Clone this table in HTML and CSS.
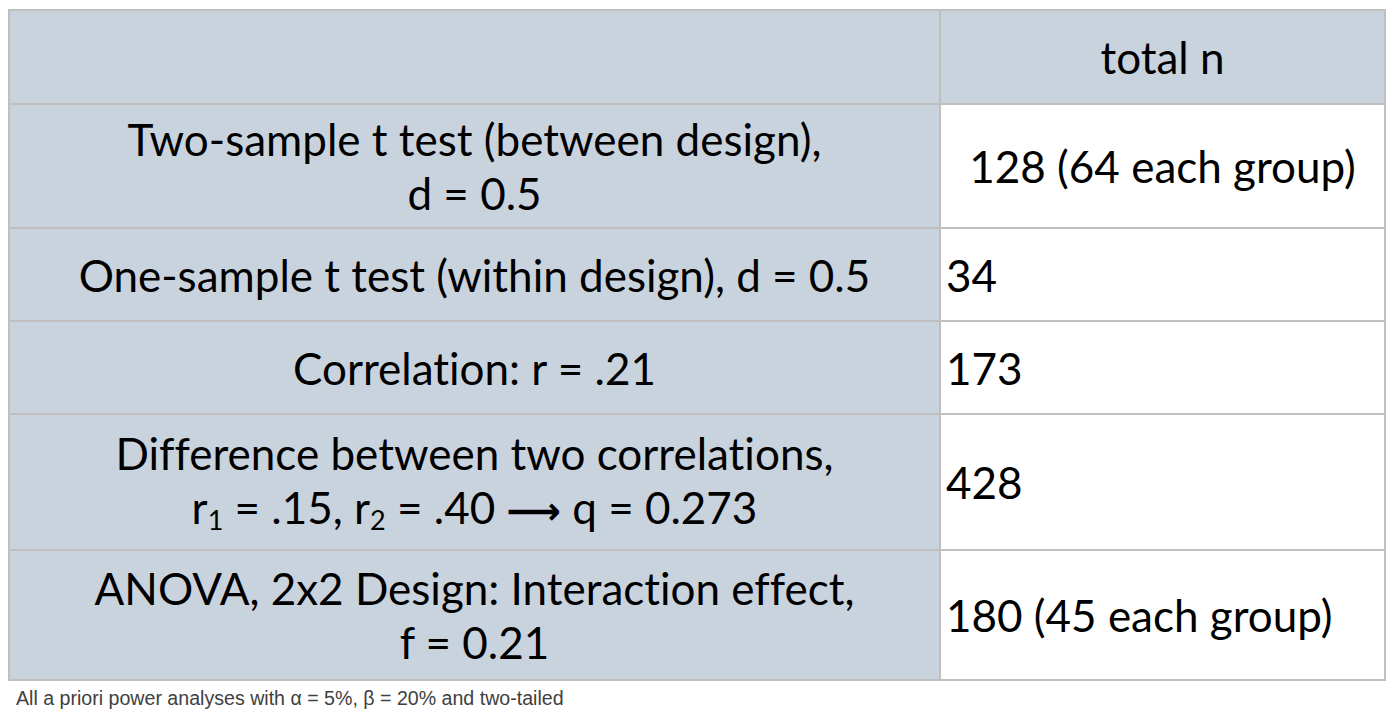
FILE: index.html
```html
<!DOCTYPE html>
<html>
<head>
<meta charset="utf-8">
<link rel="stylesheet" href="styles.css">
</head>
<body>
<div class="page">
  <table class="power">
    <tr class="r-head">
      <th class="label"></th>
      <th class="value center">total n</th>
    </tr>
    <tr class="r1">
      <td class="label">Two-sample t test (between design),<br>d = 0.5</td>
      <td class="value center">128 (64 each group)</td>
    </tr>
    <tr class="r2">
      <td class="label">One-sample t test (within design), d = 0.5</td>
      <td class="value">34</td>
    </tr>
    <tr class="r3">
      <td class="label">Correlation: r = .21</td>
      <td class="value">173</td>
    </tr>
    <tr class="r4">
      <td class="label">Difference between two correlations,<br>r<sub class="idx">1</sub> = .15, r<sub class="idx">2</sub> = .40 <span class="arrow">⟶</span> q = 0.273</td>
      <td class="value">428</td>
    </tr>
    <tr class="r5">
      <td class="label">ANOVA, 2x2 Design: Interaction effect,<br>f = 0.21</td>
      <td class="value">180 (45 each group)</td>
    </tr>
  </table>
  <p class="note">All a priori power analyses with α = 5%, β = 20% and two-tailed</p>
</div>
</body>
</html>
```
FILE: styles.css
```css
html, body {
  margin: 0;
  padding: 0;
  background: #ffffff;
}
.page {
  padding: 9px 0 0 8px;
}
.power {
  border-collapse: collapse;
  width: 1378px;
  table-layout: fixed;
  font-family: Lato, "Open Sans", sans-serif;
  font-size: 44px;
  font-variant-ligatures: none;
  color: #000;
}
.power th, .power td {
  border: 2px solid #bfbfbf;
  padding: 0 5px;
  line-height: 54px;
  font-weight: normal;
  vertical-align: middle;
}
.power .label {
  width: 919px;
  background: #c9d3dd;
  text-align: center;
}
.power .value {
  background: #ffffff;
  text-align: left;
}
.power th.value {
  background: #c9d3dd;
}
.power .center {
  text-align: center;
}
.idx {
  font-size: 27px;
  line-height: 0;
  vertical-align: -6px;
}
.arrow {
  font-family: "DejaVu Sans", sans-serif;
  font-weight: bold;
  font-size: 38px;
}
.r-head { height: 94px; }
.r1 { height: 124px; }
.r2 { height: 93px; }
.r3 { height: 93px; }
.r4 { height: 136px; }
.r5 { height: 130px; }
.note {
  margin: 6px 0 0 8px;
  font-family: "Liberation Sans", Arial, sans-serif;
  font-size: 19.6px;
  color: #404040;
}
```
